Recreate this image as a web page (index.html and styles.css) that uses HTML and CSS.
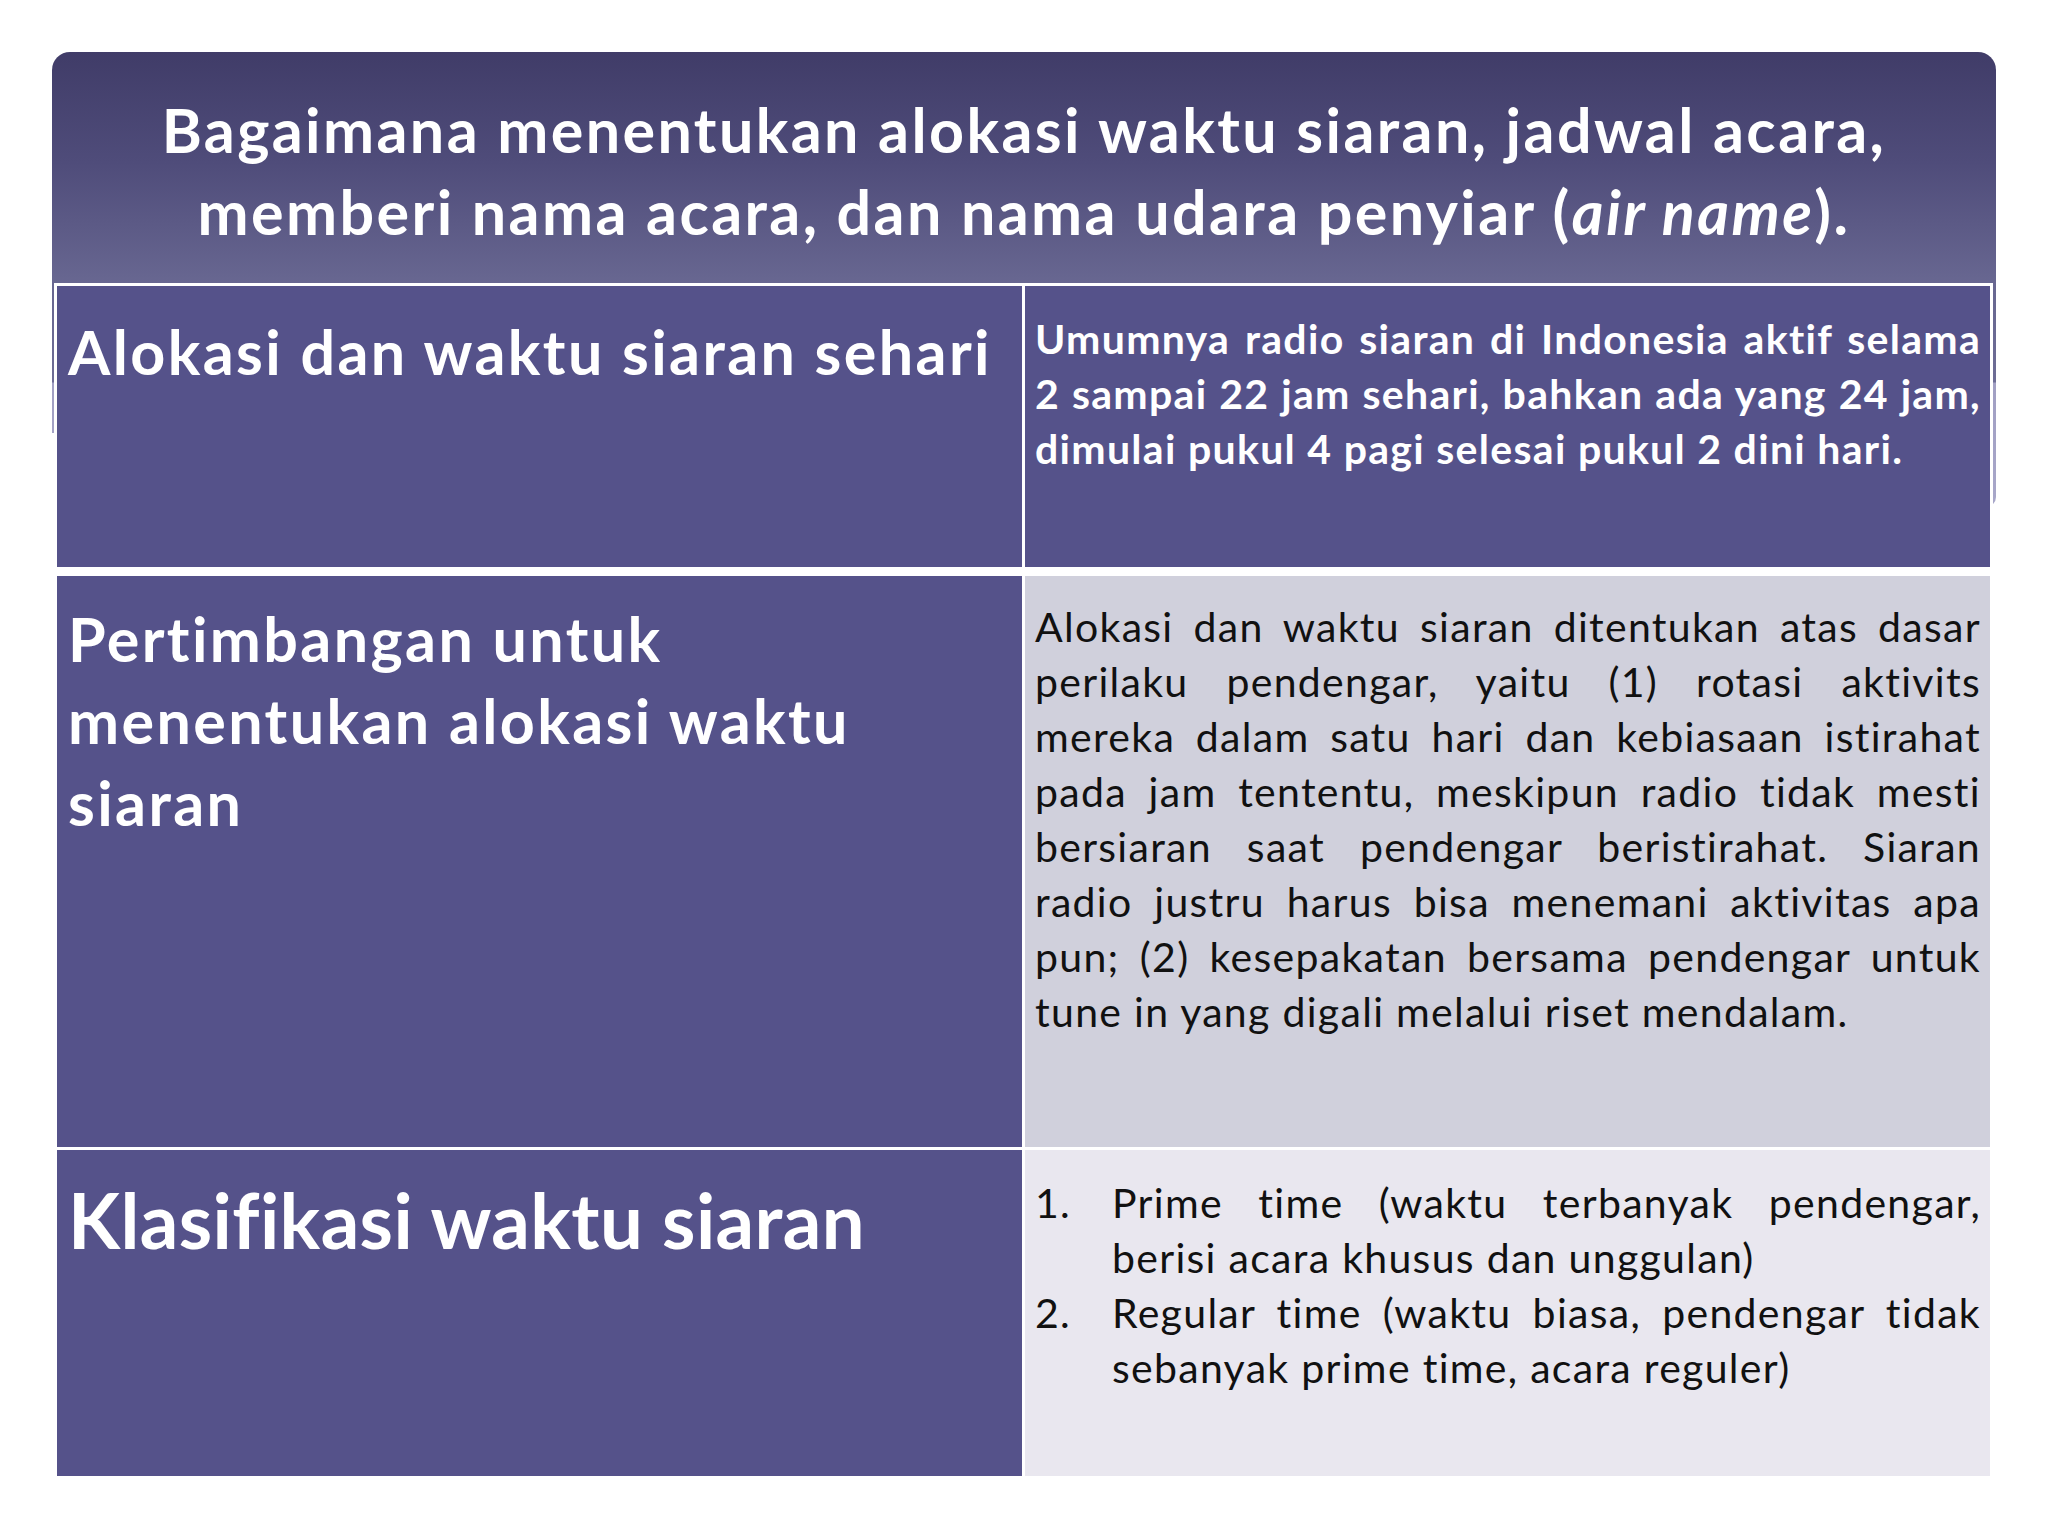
FILE: index.html
```html
<!DOCTYPE html>
<html lang="id">
<head>
<meta charset="utf-8">
<title>Alokasi waktu siaran</title>
<link rel="stylesheet" href="styles.css">
</head>
<body>
<div class="slide">
  <div class="title-box">
    <h1 class="title">Bagaimana menentukan alokasi waktu siaran, jadwal acara,<br>memberi nama acara, dan nama udara penyiar (<em>air name</em>).</h1>
  </div>
  <div class="table">
    <div class="row row1">
      <div class="cell left"><p class="label label-a">Alokasi dan waktu siaran sehari</p></div>
      <div class="cell right dark">
        <p class="body bold">
          <span class="ln">Umumnya radio siaran di Indonesia aktif selama</span>
          <span class="ln">2 sampai 22 jam sehari, bahkan ada yang 24 jam,</span>
          <span class="ln last">dimulai pukul 4 pagi selesai pukul 2 dini hari.</span>
        </p>
      </div>
    </div>
    <div class="row row2">
      <div class="cell left"><p class="label label-b">Pertimbangan untuk<br>menentukan alokasi waktu<br>siaran</p></div>
      <div class="cell right grey">
        <p class="body">
          <span class="ln">Alokasi dan waktu siaran ditentukan atas dasar</span>
          <span class="ln">perilaku pendengar, yaitu (1) rotasi aktivits</span>
          <span class="ln">mereka dalam satu hari dan kebiasaan istirahat</span>
          <span class="ln">pada jam tententu, meskipun radio tidak mesti</span>
          <span class="ln">bersiaran saat pendengar beristirahat. Siaran</span>
          <span class="ln">radio justru harus bisa menemani aktivitas apa</span>
          <span class="ln">pun; (2) kesepakatan bersama pendengar untuk</span>
          <span class="ln last">tune in yang digali melalui riset mendalam.</span>
        </p>
      </div>
    </div>
    <div class="row row3">
      <div class="cell left"><p class="label label-c">Klasifikasi waktu siaran</p></div>
      <div class="cell right pale">
        <ol class="list">
          <li class="item"><span class="num">1.</span><span class="txt"><span class="ln">Prime time (waktu terbanyak pendengar,</span><span class="ln last">berisi acara khusus dan unggulan)</span></span></li>
          <li class="item"><span class="num">2.</span><span class="txt"><span class="ln">Regular time (waktu biasa, pendengar tidak</span><span class="ln last">sebanyak prime time, acara reguler)</span></span></li>
        </ol>
      </div>
    </div>
  </div>
</div>
</body>
</html>
```

FILE: styles.css
```css
html, body {
  margin: 0;
  padding: 0;
  background: #ffffff;
}

body {
  width: 2048px;
  height: 1536px;
  overflow: hidden;
  font-family: "Lato", "Open Sans", sans-serif;
  font-variant-ligatures: none;
}

.slide {
  padding: 52px 0 0 52px;
}

.title-box {
  position: relative;
  width: 1944px;
  height: 455px;
  box-sizing: border-box;
  padding-top: 37px;
  border-radius: 18px 18px 10px 10px;
  background: linear-gradient(to bottom,
    #403c68 0px,
    #4f4c7a 110px,
    #686791 231px,
    #6d6c95 330px,
    #a19fc3 331px,
    #a8a7c9 455px);
}

.title-box::after {
  content: "";
  position: absolute;
  left: 0;
  top: 381px;
  width: 3px;
  bottom: 0;
  background: #ffffff;
}

.title {
  margin: 0;
  text-align: center;
  color: #ffffff;
  font-weight: 700;
  font-size: 61px;
  line-height: 82px;
  letter-spacing: 2.4px;
}

.title em {
  font-style: italic;
}

.table {
  position: relative;
  margin: -224px 0 0 2px;
  width: 1939px;
  box-sizing: border-box;
  padding: 3px 3px 0 3px;
  background: #ffffff;
  display: flex;
  flex-direction: column;
}

.row {
  display: flex;
  gap: 3px;
}

.row1 {
  height: 281px;
  margin-bottom: 9px;
}

.row2 {
  height: 571px;
  margin-bottom: 3px;
}

.row3 {
  height: 326px;
}

.cell {
  width: 965px;
  box-sizing: border-box;
}

.left {
  background: #55528a;
  color: #ffffff;
  padding-left: 11px;
}

.right {
  padding-left: 10px;
  padding-right: 9px;
  color: #111111;
}

.dark {
  background: #55528a;
  color: #ffffff;
  padding-top: 25px;
}

.grey {
  background: #d0d0dc;
  padding-top: 23px;
}

.pale {
  background: #e9e7ef;
  padding-top: 25px;
}

.label {
  margin: 0;
  font-weight: 700;
}

.label-a {
  padding-top: 25px;
  font-size: 61px;
  line-height: 82px;
  letter-spacing: 2.4px;
}

.label-b {
  padding-top: 22px;
  font-size: 61px;
  line-height: 82px;
  letter-spacing: 2.4px;
}

.label-c {
  padding-top: 25px;
  font-size: 76px;
  line-height: 90px;
  letter-spacing: 0.4px;
}

.body {
  margin: 0;
  font-size: 41px;
  line-height: 55px;
  letter-spacing: 1.3px;
}

.bold {
  font-weight: 700;
}

.ln {
  display: block;
  text-align: justify;
  text-align-last: justify;
  white-space: nowrap;
}

.ln.last {
  text-align-last: left;
}

.list {
  margin: 0;
  padding: 0;
  list-style: none;
  font-size: 41px;
  line-height: 55px;
  letter-spacing: 1.3px;
}

.item {
  display: flex;
}

.num {
  width: 77px;
  flex: none;
}

.txt {
  flex: 1;
}
```
